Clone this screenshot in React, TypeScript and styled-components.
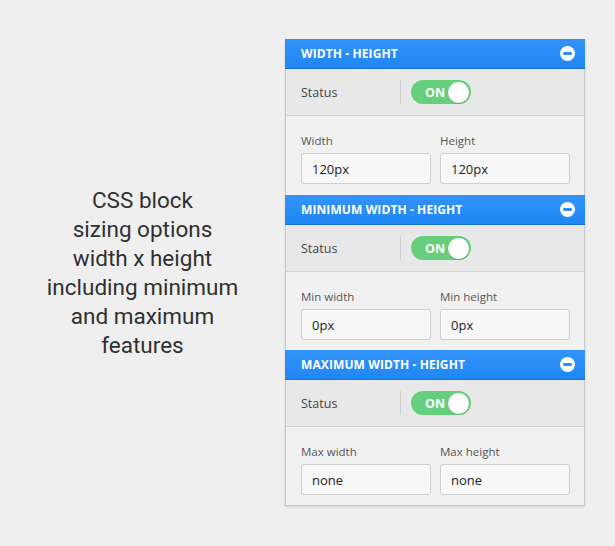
import React from 'react';
import styled, { createGlobalStyle } from 'styled-components';

const GlobalStyle = createGlobalStyle`
  html, body {
    margin: 0;
    padding: 0;
    background: #efefef;
  }
`;

const Page = styled.div`
  display: flex;
  align-items: center;
  width: 615px;
  height: 546px;
  box-sizing: border-box;
  padding: 39px 0 40px;
`;

const Caption = styled.div`
  width: 285px;
  text-align: center;
  font-family: Roboto, "Liberation Sans", sans-serif;
  font-size: 22.5px;
  font-weight: 400;
  line-height: 29px;
  color: #303030;
  padding-top: 1px;
`;

const Panel = styled.div`
  width: 300px;
  box-sizing: border-box;
  border: 1px solid #c9c9c9;
  border-top: none;
  background: #f1f1f1;
  box-shadow: 0 1px 2px rgba(0, 0, 0, 0.12);
  align-self: flex-start;
`;

const Header = styled.div`
  height: 30px;
  box-sizing: border-box;
  margin: 0 -1px;
  padding: 0 10px 0 16px;
  display: flex;
  align-items: center;
  justify-content: space-between;
  background: linear-gradient(#3393fa, #1f87f3);
  border-bottom: 1px solid #1674d8;
  color: #fff;
  font-family: "Open Sans", "Liberation Sans", sans-serif;
  font-weight: 700;
  font-size: 12px;
  letter-spacing: 0.1px;
`;

const StatusRow = styled.div`
  height: 47px;
  box-sizing: border-box;
  display: flex;
  align-items: center;
  background: #e8e8e8;
  border-bottom: 1px solid #d3d3d3;
  padding-left: 15px;
`;

const StatusLabel = styled.span`
  width: 99px;
  font-family: "Open Sans", "Liberation Sans", sans-serif;
  font-size: 12.5px;
  color: #444;
`;

const Divider = styled.span`
  width: 1px;
  height: 24px;
  background: #cfcfcf;
  margin-right: 10px;
`;

const Toggle = styled.div`
  width: 60px;
  height: 24px;
  border-radius: 12px;
  background: #66cf7c;
  display: flex;
  align-items: center;
  justify-content: space-between;
  padding: 0 2px 0 14px;
  box-sizing: border-box;
  color: #fff;
  font-family: "Open Sans", "Liberation Sans", sans-serif;
  font-weight: 700;
  font-size: 12.5px;
`;

const Knob = styled.span`
  width: 21px;
  height: 21px;
  border-radius: 50%;
  background: #fff;
  box-shadow: 0 1px 1px rgba(0, 0, 0, 0.15);
`;

const Fields = styled.div<{ $h: number }>`
  height: ${(p) => p.$h}px;
  box-sizing: border-box;
  display: grid;
  grid-template-columns: 130px 130px;
  column-gap: 9px;
  padding: 17px 0 0 15px;
`;

const Field = styled.div`
  display: flex;
  flex-direction: column;
`;

const Label = styled.span`
  font-family: "Open Sans", "Liberation Sans", sans-serif;
  font-size: 11.5px;
  color: #555;
  line-height: 16px;
  margin-bottom: 4px;
`;

const Input = styled.div`
  height: 31px;
  box-sizing: border-box;
  border: 1px solid #cfcfcf;
  border-radius: 3px;
  background: #f8f8f8;
  padding-left: 10px;
  display: flex;
  align-items: center;
  font-family: "Open Sans", "Liberation Sans", sans-serif;
  font-size: 13px;
  color: #222;
`;

const MinusIcon = () => (
  <svg width="15" height="15" viewBox="0 0 16 16">
    <circle cx="8" cy="8" r="8" fill="#fff" />
    <rect x="3.5" y="6.5" width="9" height="3" fill="#1f87f3" />
  </svg>
);

const sections = [
  { title: 'WIDTH - HEIGHT', h: 79, fields: [['Width', '120px'], ['Height', '120px']] },
  { title: 'MINIMUM WIDTH - HEIGHT', h: 78, fields: [['Min width', '0px'], ['Min height', '0px']] },
  { title: 'MAXIMUM WIDTH - HEIGHT', h: 78, fields: [['Max width', 'none'], ['Max height', 'none']] },
];

export default function App() {
  return (
    <>
      <GlobalStyle />
      <Page>
        <Caption>
          CSS block
          <br />
          sizing options
          <br />
          width x height
          <br />
          including minimum
          <br />
          and maximum
          <br />
          features
        </Caption>
        <Panel>
          {sections.map((s) => (
            <React.Fragment key={s.title}>
              <Header>
                <span>{s.title}</span>
                <MinusIcon />
              </Header>
              <StatusRow>
                <StatusLabel>Status</StatusLabel>
                <Divider />
                <Toggle>
                  ON
                  <Knob />
                </Toggle>
              </StatusRow>
              <Fields $h={s.h}>
                {s.fields.map(([label, value]) => (
                  <Field key={label}>
                    <Label>{label}</Label>
                    <Input>{value}</Input>
                  </Field>
                ))}
              </Fields>
            </React.Fragment>
          ))}
        </Panel>
      </Page>
    </>
  );
}
